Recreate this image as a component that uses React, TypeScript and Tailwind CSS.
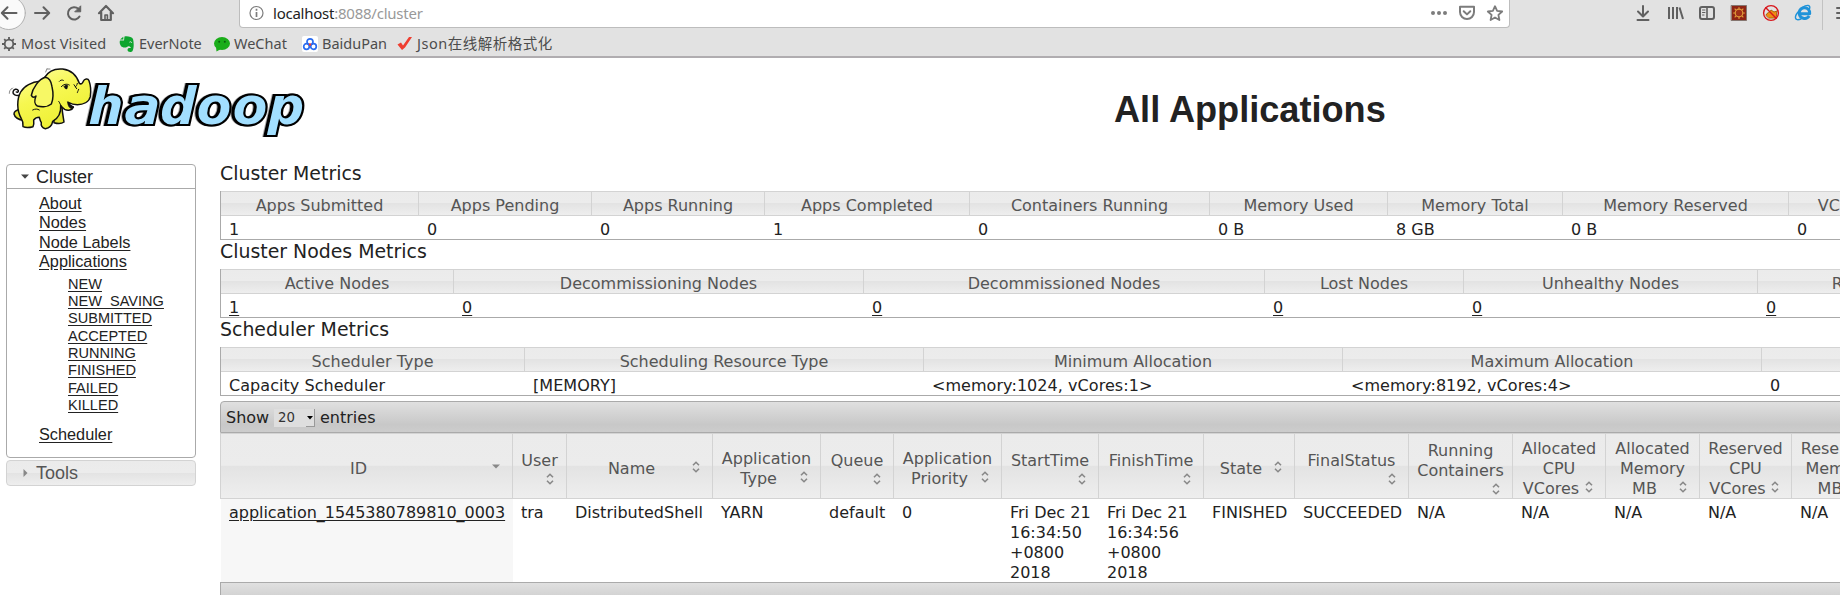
import React from "react";

const glass = "bg-[linear-gradient(to_bottom,#ebebeb_0%,#ececec_49%,#e3e3e3_50%,#eeeeee_100%)]";

type Metric = { head: string; value: string; w: string };

const clusterMetrics: Metric[] = [
  { head: "Apps Submitted", value: "1", w: "w-[198px]" },
  { head: "Apps Pending", value: "0", w: "w-[173px]" },
  { head: "Apps Running", value: "0", w: "w-[173px]" },
  { head: "Apps Completed", value: "1", w: "w-[205px]" },
  { head: "Containers Running", value: "0", w: "w-[240px]" },
  { head: "Memory Used", value: "0 B", w: "w-[178px]" },
  { head: "Memory Total", value: "8 GB", w: "w-[175px]" },
  { head: "Memory Reserved", value: "0 B", w: "w-[226px]" },
  { head: "VCores Used", value: "0", w: "w-[160px]" },
];

const nodeMetrics: Metric[] = [
  { head: "Active Nodes", value: "1", w: "w-[233px]" },
  { head: "Decommissioning Nodes", value: "0", w: "w-[410px]" },
  { head: "Decommissioned Nodes", value: "0", w: "w-[401px]" },
  { head: "Lost Nodes", value: "0", w: "w-[199px]" },
  { head: "Unhealthy Nodes", value: "0", w: "w-[294px]" },
  { head: "Rebooted Nodes", value: "0", w: "w-[280px]" },
];

const schedulerMetrics: Metric[] = [
  { head: "Scheduler Type", value: "Capacity Scheduler", w: "w-[304px]" },
  { head: "Scheduling Resource Type", value: "[MEMORY]", w: "w-[399px]" },
  { head: "Minimum Allocation", value: "<memory:1024, vCores:1>", w: "w-[419px]" },
  { head: "Maximum Allocation", value: "<memory:8192, vCores:4>", w: "w-[419px]" },
  { head: "", value: "0", w: "w-[200px]" },
];

type Column = { lines: string[]; value: string[]; w: string; sorted?: boolean };

const columns: Column[] = [
  { lines: ["ID"], value: ["application_1545380789810_0003"], w: "w-[292px]", sorted: true },
  { lines: ["User"], value: ["tra"], w: "w-[54px]" },
  { lines: ["Name"], value: ["DistributedShell"], w: "w-[146px]" },
  { lines: ["Application", "Type"], value: ["YARN"], w: "w-[108px]" },
  { lines: ["Queue"], value: ["default"], w: "w-[73px]" },
  { lines: ["Application", "Priority"], value: ["0"], w: "w-[108px]" },
  { lines: ["StartTime"], value: ["Fri Dec 21", "16:34:50", "+0800", "2018"], w: "w-[97px]" },
  { lines: ["FinishTime"], value: ["Fri Dec 21", "16:34:56", "+0800", "2018"], w: "w-[105px]" },
  { lines: ["State"], value: ["FINISHED"], w: "w-[91px]" },
  { lines: ["FinalStatus"], value: ["SUCCEEDED"], w: "w-[114px]" },
  { lines: ["Running", "Containers"], value: ["N/A"], w: "w-[104px]" },
  { lines: ["Allocated", "CPU", "VCores"], value: ["N/A"], w: "w-[93px]" },
  { lines: ["Allocated", "Memory", "MB"], value: ["N/A"], w: "w-[94px]" },
  { lines: ["Reserved", "CPU", "VCores"], value: ["N/A"], w: "w-[92px]" },
  { lines: ["Reserved", "Memory", "MB"], value: ["N/A"], w: "w-[93px]" },
];

function MetricsTable({ title, cells, linked }: { title: string; cells: Metric[]; linked?: boolean }) {
  return (
    <section className="h-[78px]">
      <h3 className="flex h-[28px] items-start text-[18.9px] leading-[21px]">{title}</h3>
      <div className="flex w-max flex-col border-b border-l border-[#aaaaaa]">
        <div className="flex">
          {cells.map((c, i) => (
            <div
              key={i}
              className={`${c.w} ${glass} h-[25px] shrink-0 whitespace-nowrap border-y border-r border-[#d3d3d3] pt-[4px] text-center leading-[20px] text-[#555555]`}
            >
              {c.head}
            </div>
          ))}
        </div>
        <div className="flex">
          {cells.map((c, i) => (
            <div key={i} className={`${c.w} h-[23px] shrink-0 whitespace-nowrap pl-[8px] pt-[4px] leading-[20px]`}>
              <span className={linked ? "underline underline-offset-2" : "tracking-[0.050px]"}>{c.value}</span>
            </div>
          ))}
        </div>
      </div>
    </section>
  );
}

function SortIcon({ sorted }: { sorted?: boolean }) {
  return (
    <svg className="float-right -mt-[2px] mb-[2px] h-4 w-4" viewBox="0 0 16 16">
      {sorted ? (
        <path d="M4 7.500h8l-4 4z" fill="#888888" />
      ) : (
        <path d="M5 8.300l3-3 3 3M5 11.700l3 3 3-3" fill="none" stroke="#888888" strokeWidth="1.600" />
      )}
    </svg>
  );
}

function HadoopLogo() {
  return (
    <svg className="h-[85px] w-[320px]" viewBox="0 0 960 255">
      <text
        x="264"
        y="192"
        textLength="648"
        lengthAdjust="spacingAndGlyphs"
        fontSize="156"
        fill="#a2dfff"
        stroke="#000"
        strokeWidth="12"
        strokeMiterlimit="2"
        paintOrder="stroke"
        className="font-['DejaVu_Sans_Mono',monospace] font-bold italic [filter:drop-shadow(-4px_0_0_#000)]"
      >
        hadoop
      </text>
      <defs>
        <linearGradient id="skin" x1="0" y1="0" x2="0.5" y2="1">
          <stop offset="0" stopColor="#ffffa0" />
          <stop offset="0.5" stopColor="#f6f750" />
          <stop offset="1" stopColor="#eef032" />
        </linearGradient>
      </defs>
      <g stroke="#111" strokeWidth="4.5" strokeLinejoin="round" strokeLinecap="round">
        <path d="M58 106c-10 2-20-2-19-10 1-8 12-12 16-4 1 4-3 6-6 4" fill="none" />
        <path d="M160 150l26-8c1 16 4 30 6 44-8 6-20 5-30 2z" fill="#e3e435" />
        <path d="M62 148c-12 2-20 8-20 14 2 10 14 18 28 18l10-30z" fill="#e3e435" />
        <path
          d="M134 52C146 32 166 25 188 27C212 30 230 46 238 70C243 74 248 70 250 64C253 56 264 54 267 62C272 76 273 96 271 110C267 126 250 134 232 134C220 134 212 131 205 127C206 134 212 138 220 141C217 151 203 153 194 148C188 144 184 140 182 136C184 160 172 176 158 184C156 196 148 204 136 206C126 204 122 196 124 188C120 182 119 176 118 172C110 172 104 176 101 180C102 188 102 194 99 200C88 203 76 203 69 200C70 190 68 182 64 176C50 152 50 118 62 96C72 78 96 66 120 64Z"
          fill="url(#skin)"
        />
        <path d="M136 52C116 58 98 84 94 106C98 114 104 112 108 108C102 122 104 134 112 138C126 142 144 140 154 132C160 118 160 98 156 80C154 66 148 54 136 52Z" fill="#f7f865" />
        <path d="M98 150C106 146 112 146 118 150M182 136C180 130 178 126 176 124" fill="none" strokeWidth="3" />
        <path d="M203 126c0 10 4 18 12 20 5-1 6-3 6-5-6-3-12-8-18-15z" fill="#111" strokeWidth="2" />
        <path d="M178 64c3-4 8-5 12-3M184 80c6-7 16-10 24-5M232 70c-1 5-3 9-6 11M222 74l8 12M236 88c-2 6-4 8-4 10" fill="none" strokeWidth="3" />
        <path d="M192 80c3-6 9-6 12-3l-3 10c-3 1-7-1-9-7z" fill="#111" strokeWidth="1" />
        <path d="M28 100c0-6 2-10 6-14M34 88l4-4M137 36l4-10M142 27h8" fill="none" stroke="#888" strokeWidth="3" />
      </g>
    </svg>
  );
}

function Navigation() {
  return (
    <svg className="h-[31px] w-[120px]" viewBox="0 0 120 31" fill="none" stroke="#606060" strokeWidth="2" strokeLinecap="round" strokeLinejoin="round">
      <circle cx="8.8" cy="13" r="16.5" fill="#fafafa" stroke="#b0b0b0" strokeWidth="1" />
      <path d="M2 13h14.5M7.5 7.2L1.8 13l5.7 5.8" />
      <path d="M35 13h14M43.5 7.2l5.7 5.8-5.7 5.8" />
      <path d="M79.5 16.5a6.2 6.2 0 1 1-1-7.6" />
      <path d="M80.7 6.2v5.6h-5.6z" fill="#606060" strokeWidth="1" />
      <path d="M99 13.2l7-7.2 7 7.2M101.2 12.5V20h9.6v-7.5" strokeWidth="2.2" />
      <path d="M105 20v-5h2.4v5" strokeWidth="1.6" />
    </svg>
  );
}

function UrlActions() {
  return (
    <svg className="mr-[3px] h-[26px] w-[78px]" viewBox="0 0 78 26" fill="none" stroke="#7c7c7c" strokeWidth="2" strokeLinejoin="round" strokeLinecap="round">
      <g fill="#7c7c7c" stroke="none">
        <circle cx="5" cy="13" r="2" />
        <circle cx="11" cy="13" r="2" />
        <circle cx="17" cy="13" r="2" />
      </g>
      <path d="M32 6.8h14v5.2a7 7 0 0 1-14 0zM35.7 11.2l3.3 3.2 3.3-3.2" />
      <path d="M67 6.200l2.100 4.700 5.100.6-3.800 3.400 1 5.100-4.400-2.600-4.400 2.600 1-5.100-3.800-3.400 5.100-.6z" strokeWidth="1.8" />
    </svg>
  );
}

function ToolbarIcons() {
  return (
    <svg className="h-[30px] w-[206px]" viewBox="0 0 206 30" fill="none" stroke="#606060" strokeWidth="2" strokeLinecap="round" strokeLinejoin="round">
      <path d="M9 6v10M4 11.5l5 5 5-5M3.5 20h11" />
      <path d="M35 7v12M39 7v12M43 7v12M45.5 7.5L49 19" strokeLinecap="butt" />
      <rect x="66" y="7" width="14" height="12" rx="2" />
      <path d="M73 7v12" strokeWidth="1.6" />
      <path d="M68.5 10h2.5M68.5 12.5h2.5M68.5 15h1.5" strokeWidth="1" />
      <rect x="97.5" y="5.5" width="15" height="15" fill="#8e2414" stroke="#857670" strokeWidth="1" />
      <circle cx="105" cy="13" r="3.8" fill="#a03018" stroke="#e09a3a" strokeWidth="1.2" />
      <path d="M105 7.500v1.500M105 17v1.500M99.500 13h1.500M109 13h1.500M101 9l1 1M108 16l1 1M109 9l-1 1M102 16l-1 1" stroke="#e09a3a" strokeWidth="1.1" />
      <path d="M132 15c1-3 4-2 5-5l3 2 3-1c-1 3 0 5-1 7h-7z" fill="#ef8d12" stroke="#a9640c" strokeWidth="1" />
      <circle cx="137" cy="13" r="7.400" stroke="#d8161c" strokeWidth="1.4" />
      <path d="M131.800 7.800l10.400 10.400" stroke="#d8161c" strokeWidth="1.400" />
      <path d="M175.200 16c-2.600 4-10 2.800-10-3 0-7.200 11-7 10.500.7h-9" stroke="#1f93d9" strokeWidth="3" strokeLinecap="butt" />
      <path d="M164 12c-4 5-3.500 9.500 3 7M168 7.500c5-3 9-3 7.500 1.500" stroke="#1f93d9" strokeWidth="1.400" />
      <path d="M188.500 0v30" stroke="#c2c2c2" strokeWidth="1" />
      <path d="M203 8h6M203 13h6M203 18h6" />
    </svg>
  );
}

function Bookmark({ icon, label, width, spacing = "" }: { icon: React.ReactNode; label: string; width: string; spacing?: string }) {
  return (
    <span className={`flex h-[22px] shrink-0 items-center whitespace-nowrap ${width}`}>
      <svg className="mr-[4px] h-4 w-4 shrink-0" viewBox="0 0 16 16">
        {icon}
      </svg>
      <span className={spacing}>{label}</span>
    </span>
  );
}

const gear = (
  <g fill="none" stroke="#5c5c5c">
    <circle cx="8" cy="8" r="4.300" strokeWidth="1.800" />
    <path d="M8 1v2.500M8 12.500V15M1 8h2.500M12.500 8H15M3.200 3.200l1.600 1.600M11.200 11.200l1.600 1.600M12.800 3.200l-1.600 1.600M4.800 11.200l-1.600 1.600" strokeWidth="1.800" />
  </g>
);

const evernote = (
  <g>
    <path d="M5.500.5C9 0 13 1 14 3c1 4 1 9-.500 12-1 1.500-5 1.300-5-1 0-1.500 1-2 2-2H12c-1-2-3-2-4-1-2 1-5 .5-6-1-1.500-2-1.500-4-1-5.500h4z" fill="#0da52e" />
    <path d="M1 3.500L4.300.8v2.700z" fill="#0da52e" />
    <path d="M10.500 6.200c1-.8 2-.5 2.200.6" stroke="#e2e2e2" strokeWidth="1" fill="none" />
  </g>
);

const wechat = (
  <g>
    <ellipse cx="8" cy="7.500" rx="8" ry="6.500" fill="#1aad19" />
    <path d="M2 11l.5 4.500L7 13z" fill="#1aad19" />
    <circle cx="5.200" cy="5.800" r="1" fill="#0a5d0c" />
    <circle cx="10.800" cy="5.800" r="1" fill="#0a5d0c" />
  </g>
);

const baidu = (
  <g>
    <rect width="16" height="16" rx="2" fill="#fff" />
    <g fill="none" stroke="#2a6cf0" strokeWidth="1.700">
      <circle cx="8" cy="5.800" r="3" />
      <circle cx="4.500" cy="10.500" r="2.800" />
      <circle cx="11.500" cy="10.500" r="2.800" />
    </g>
    <circle cx="8" cy="8.500" r="1.200" fill="#ee3a3a" />
  </g>
);

const check = <path d="M0.500 8.500L4 6.500l2 3L12 1h3L8 11.500 5 14z" fill="#ef3e30" />;

const states = ["NEW", "NEW_SAVING", "SUBMITTED", "ACCEPTED", "RUNNING", "FINISHED", "FAILED", "KILLED"];

function Sidebar() {
  return (
    <nav className="flex w-[190px] shrink-0 flex-col gap-[2px] font-['Liberation_Sans',Arial,sans-serif]">
      <div className="flex h-[294px] flex-col rounded-[4px] border border-[#aaaaaa]">
        <div className="flex h-[24px] items-center border-b border-[#aaaaaa] pl-[13px] pt-[1px] text-[18px]">
          <svg className="h-[10px] w-[10px]" viewBox="0 0 10 10">
            <path d="M1 2.500h8L5 6.700z" fill="#454545" />
          </svg>
          <span className="pl-[6px]">Cluster</span>
        </div>
        <div className="flex flex-col pl-[32px] pt-[5px] text-[16.300px] leading-[19.400px]">
          {["About", "Nodes", "Node Labels", "Applications"].map((t) => (
            <a key={t} className="-mb-[0.100px] w-max underline underline-offset-2">
              {t}
            </a>
          ))}
          <div className="flex flex-col pb-[10.500px] pl-[29px] pt-[4.600px] text-[14.550px] leading-[17.300px]">
            {states.map((t) => (
              <a key={t} className="w-max underline underline-offset-2">
                {t}
              </a>
            ))}
          </div>
          <a className="w-max underline underline-offset-2">Scheduler</a>
        </div>
      </div>
      <div className={`${glass} flex h-[26px] items-center rounded-[4px] border border-[#d3d3d3] pl-[13px] text-[18px] text-[#555555]`}>
        <svg className="h-[10px] w-[10px]" viewBox="0 0 10 10">
          <path d="M3.500 1v8L7.500 5z" fill="#888888" />
        </svg>
        <span className="pl-[6px]">Tools</span>
      </div>
    </nav>
  );
}

function ApplicationsTable() {
  return (
    <section className="flex w-[1640px] flex-col">
      <div className="flex h-[32px] items-center rounded-tl-[4px] border border-[#aaaaaa] bg-[linear-gradient(to_bottom,#e0e0e0,#c8c8c8_75%,#cccccc)] pl-[5px] pt-[1px]">
        <span className="w-[48px]">Show</span>
        <span className="flex h-[18px] w-[41px] items-center justify-between border-r border-[#999999] bg-[#dedede] pl-[4px] text-[13.300px] text-[#333333]">
          20
          <svg className="h-[18px] w-[8px]" viewBox="0 0 8 18">
            <path d="M1 7h6L4 10.500z" fill="#000" />
            <path d="M0 17.500h8" stroke="#999" />
          </svg>
        </span>
        <span className="pl-[5px]">entries</span>
      </div>
      <div className="flex border-l border-[#d3d3d3]">
        {columns.map((c, i) => (
          <div key={i} className={`${c.w} ${glass} flex h-[66px] shrink-0 flex-col justify-center border-y border-r border-[#d3d3d3] px-[8px] text-center leading-[20px] text-[#555555]`}>
            <div className="-mb-[5px] flow-root pt-[1px]">
              {c.lines.slice(0, -1).map((l, j) => (
                <div key={j}>{l}</div>
              ))}
              {c.lines[c.lines.length - 1]}
              <SortIcon sorted={c.sorted} />
            </div>
          </div>
        ))}
      </div>
      <div className="flex h-[83px] pl-px">
        {columns.map((c, i) => (
          <div key={i} className={`${c.w} ${c.sorted ? "bg-[#f7f7f7]" : ""} shrink-0 whitespace-nowrap pl-[8px] pt-[4px] leading-[20px]`}>
            {c.value.map((v, j) => (
              <div key={j} className={c.sorted ? "tracking-[-0.040px] underline underline-offset-2" : ""}>
                {v}
              </div>
            ))}
          </div>
        ))}
      </div>
      <div className="h-[32px] border border-[#aaaaaa] bg-[linear-gradient(to_bottom,#e0e0e0,#c8c8c8_75%,#cccccc)]" />
    </section>
  );
}

export default function App() {
  return (
    <div className="h-[595px] w-[1840px] overflow-hidden bg-white text-[16px] text-[#222222] font-['DejaVu_Sans',sans-serif]">
      <header className="h-[58px] overflow-hidden border-b-2 border-[#b0adb0] bg-[#e2e2e2] font-['Noto_Sans','Noto_Sans_CJK_SC',sans-serif]">
        <div className="flex h-[31px] items-start">
          <Navigation />
          <div className="ml-[119px] flex h-[28px] w-[1271px] items-start rounded-b-[4px] border border-t-0 border-[#bdbdbd] bg-white">
            <svg className="ml-[9px] h-[26px] w-[16px]" viewBox="0 0 16 26" fill="none" stroke="#7c7c7c">
              <circle cx="7.500" cy="13" r="6.500" strokeWidth="1.200" />
              <path d="M7.500 12v5M7.500 8.700v2" strokeWidth="1.700" />
            </svg>
            <span className="pl-[8px] text-[15px] leading-[26px] text-[#999999] tracking-[-0.240px]">
              <span className="text-[#222222]">localhost</span>:8088/cluster
            </span>
            <span className="grow" />
            <UrlActions />
          </div>
          <span className="grow" />
          <ToolbarIcons />
        </div>
        <div className="flex h-[25px] items-center pl-px text-[14.500px] text-[#4c4c4c]">
          <Bookmark icon={gear} label="Most Visited" width="w-[118px]" spacing="tracking-[0.170px]" />
          <Bookmark icon={evernote} label="EverNote" width="w-[95px]" />
          <Bookmark icon={wechat} label="WeChat" width="w-[88px]" />
          <Bookmark icon={baidu} label="BaiduPan" width="w-[95px]" />
          <Bookmark icon={check} label="Json在线解析格式化" width="w-[170px]" spacing="tracking-[0.500px]" />
        </div>
      </header>
      <div className="flex h-[106px]">
        <div className="pt-[2px]">
          <HadoopLogo />
        </div>
        <h1 className="pl-[794px] pt-[30px] font-['Liberation_Sans',Arial,sans-serif] text-[36.150px] font-bold leading-[44px]">All Applications</h1>
      </div>
      <div className="flex items-start gap-[24px] pl-[6px]">
        <Sidebar />
        <main className="flex shrink-0 flex-col">
          <div className="-mt-[1px] flex flex-col">
            <MetricsTable title="Cluster Metrics" cells={clusterMetrics} />
            <MetricsTable title="Cluster Nodes Metrics" cells={nodeMetrics} linked />
            <MetricsTable title="Scheduler Metrics" cells={schedulerMetrics} />
          </div>
          <div className="pt-[4px]">
            <ApplicationsTable />
          </div>
        </main>
      </div>
    </div>
  );
}
